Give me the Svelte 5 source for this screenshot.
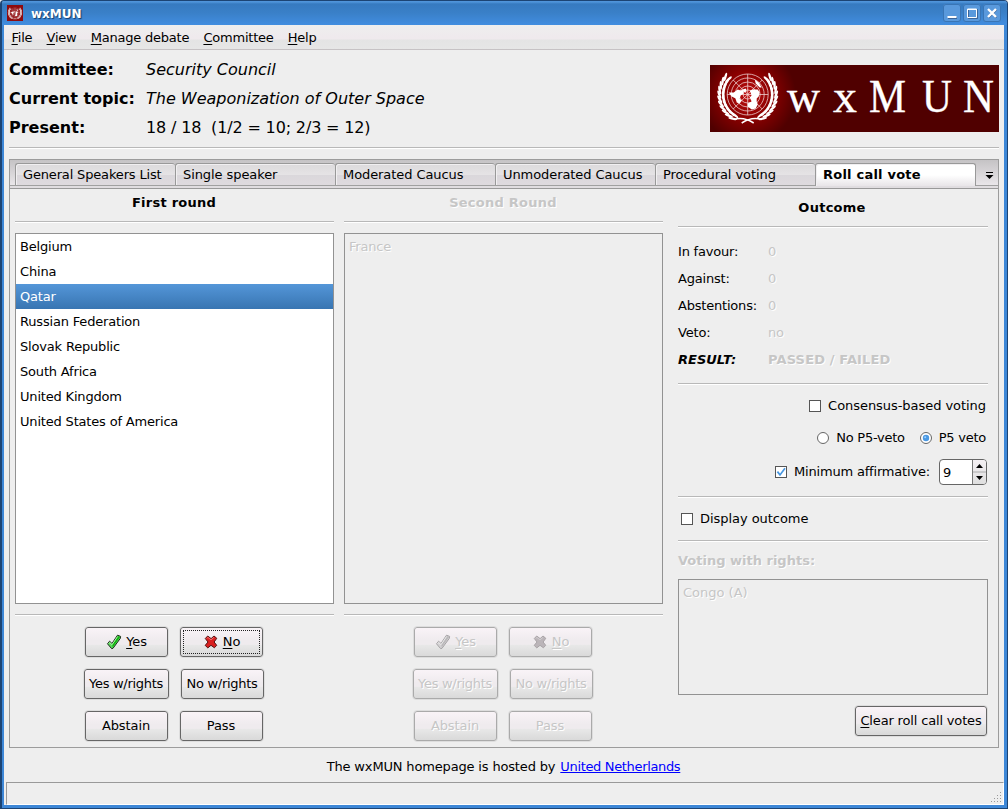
<script>
  const menus = ['File', 'View', 'Manage debate', 'Committee', 'Help'];
  const tabs = ['General Speakers List', 'Single speaker', 'Moderated Caucus', 'Unmoderated Caucus', 'Procedural voting', 'Roll call vote'];
  const countries = ['Belgium', 'China', 'Qatar', 'Russian Federation', 'Slovak Republic', 'South Africa', 'United Kingdom', 'United States of America'];
  const facts = [['Committee:', 'Security Council', true], ['Current topic:', 'The Weaponization of Outer Space', true], ['Present:', '18 / 18  (1/2 = 10; 2/3 = 12)', false]];
  const results = [['In favour:', '0'], ['Against:', '0'], ['Abstentions:', '0'], ['Veto:', 'no']];
  const rounds = [
    { title: 'First round', items: countries, disabled: false },
    { title: 'Second Round', items: ['France'], disabled: true }
  ];
  const letters = [['w', 77, 33], ['x', 123, 24], ['M', 159, 37], ['U', 212, 30], ['N', 253, 31]];
  // Laurel leaves: pairs set along an arc on both sides of the globe.
  const leaves = [];
  for (let i = 0; i < 11; i++) {
    const a = -38 + i * 9.6;
    const r = (a * Math.PI) / 180;
    for (const d of [0, 1]) {
      const rad = d ? 28.4 : 24.4;
      leaves.push({ x: Math.cos(r) * rad, y: Math.sin(r) * rad, rot: a - 90 + (d ? 20 : -8) });
    }
  }
  let selected = $state('Qatar');
  let consensus = $state(false);
  let veto = $state(true);
  let minimum = $state(true);
  let display = $state(false);
</script>

{#snippet emblem()}
  <g fill="none" stroke="#fff" stroke-width=".75" opacity=".85">
    <circle r="20.500" /><circle r="16.500" /><circle r="12.500" /><circle r="8.500" /><circle r="4.500" />
    <path d="M0-20.500V20.500M-20.500 0H20.500M-14.500-14.500L14.500 14.500M14.500-14.500L-14.500 14.500" />
  </g>
  <path fill="#fff" d="M-19-2l5 0 4-3 3 1 2-1 1 4-3 2-1 3 2 2-2 3-3-1-1-4-4-2zM-5-5l3-1 1 3-3 1zM2-4l3-1 5 0 2 3-1 4-2 2 0 3 1 3-2 4-4 1-4-3 0-3 4-2-2-4 2-2zM7-15l4 3 3 5-2 0-4-4z" />
  {#each [1, -1] as side}
    <g transform="scale({side} 1)" fill="#fff">
      {#each leaves as l}
        <ellipse rx="4.4" ry="1.2" transform="translate({l.x} {l.y}) rotate({l.rot})" />
      {/each}
      <path d="M14 25Q4 22-6 28.500" fill="none" stroke="#fff" stroke-width="1.500" />
    </g>
  {/each}
{/snippet}

{#snippet voteIcon(kind, off)}
  <svg class="vicon" width="16" height="16" viewBox="0 0 16 16">
    {#if kind === 'yes'}
      <path d="M1.5 9.8L3.6 7.2 6 9.5 11.5 1.2 14.6 2.4 14.3 4.4 7 14.3 5.6 14.6Z" fill={off ? '#d4d2d4' : '#5bdc5b'} stroke={off ? '#a5a3a5' : '#1c2c1c'} stroke-linejoin="round" />
      <path d="M11.9 2L14 3 6.8 13.2 6.2 10.8z" fill={off ? '#bab8ba' : '#10b410'} />
      <path d="M2.7 9.6l1-1.1 2.4 2.2 5.5-8.2" fill="none" stroke={off ? '#ececec' : '#b5f7b0'} stroke-width=".9" />
    {:else}
      <path d="M2.3 4.5L4.7 2 8.1 4.6 11 2 13.8 4.3 11.1 8 13.7 11.3 11.4 13.8 8 11.3 4.8 13.9 2.2 11.4 5 8Z" fill={off ? '#bbb5b9' : '#d92020'} stroke={off ? '#a9a4a7' : '#541313'} stroke-linejoin="round" />
      <path d="M3.7 4.4L4.9 3.4 8 5.8 10.9 3.4" fill="none" stroke={off ? '#d4d0d2' : '#f77'} stroke-width=".9" />
    {/if}
  </svg>
{/snippet}

{#snippet check(on)}
  <svg class="box" width="12" height="12" viewBox="0 0 12 12">
    <rect x=".5" y=".5" width="11" height="11" fill="#fff" stroke="#555" />
    {#if on}<path d="M2.4 5.6L5 8.9 10 2.3" fill="none" stroke="#4796e0" stroke-width="1.7" />{/if}
  </svg>
{/snippet}

{#snippet radio(on)}
  <svg class="box" width="12" height="12" viewBox="0 0 12 12">
    <circle cx="6" cy="6" r="5.5" fill="#fff" stroke="#666" />
    {#if on}<circle cx="6" cy="6" r="3.2" fill="#4a98e2" /><circle cx="5.2" cy="5.2" r="1" fill="#9bd0ff" />{/if}
  </svg>
{/snippet}

<div class="window">
  <header class="title">
    <svg width="16" height="16" viewBox="0 0 16 16"><rect width="16" height="16" fill="#8e0b0e" /><g transform="translate(8 7.6) scale(.235)">{@render emblem()}</g></svg>
    <b>wxMUN</b>
    <div class="controls">
      <span><svg width="18" height="18"><path d="M5 14h9" stroke="#235" stroke-width="2" opacity=".5" /><path d="M4.500 13h9" stroke="#fff" stroke-width="2" /></svg></span>
      <span><svg width="18" height="18"><path d="M5.500 5.500h9v9h-9z" fill="none" stroke="#235" opacity=".5" /><path d="M4.500 5h9v8.500h-9zM4.500 5.500h9" fill="none" stroke="#fff" /></svg></span>
      <span><svg width="18" height="18"><path d="M5.500 5.500l8 8m0-8l-8 8" stroke="#235" stroke-width="2" opacity=".5" /><path d="M5 5l8 8m0-8l-8 8" stroke="#fff" stroke-width="2.400" /></svg></span>
    </div>
  </header>

  <nav>
    {#each menus as m}<span><u>{m[0]}</u>{m.slice(1)}</span>{/each}
  </nav>

  <section class="head">
    <div class="facts">
      {#each facts as [k, v, italic]}
        <b>{k}</b><span class:italic class:count={!italic}>{v}</span>
      {/each}
    </div>
    <svg class="banner" width="289" height="67" viewBox="0 0 289 67">
      <defs><radialGradient id="glow" gradientUnits="userSpaceOnUse" cx="38" cy="30" r="48"><stop offset="0" stop-color="#c01010" /><stop offset=".5" stop-color="#8a0000" /><stop offset="1" stop-color="#500000" /></radialGradient></defs>
      <rect width="289" height="67" fill="url(#glow)" />
      <g transform="translate(37.700 29.500)">{@render emblem()}</g>
      {#each letters as [c, x, w]}
        <text {x} y="47" textLength={w} lengthAdjust="spacingAndGlyphs">{c}</text>
      {/each}
    </svg>
  </section>
  <hr class="tophr" />

  <main>
    <div class="tabs">
      {#each tabs as t, i}<div class="tab" class:first={i === 0} class:active={i === 5}><span>{t}</span></div>{/each}
      <div class="more"><svg width="9" height="8"><path d="M1 .5h7" stroke="#000" /><path d="M.5 3h8L4.500 7z" /></svg></div>
    </div>
    <div class="page">
      {#each rounds as r}
        <section class="round" class:disabled={r.disabled}>
          <h2>{r.title}</h2>
          <hr />
          <div class="list">
            {#each r.items as c}
              <!-- svelte-ignore a11y_click_events_have_key_events, a11y_no_static_element_interactions -->
              <div class="item" class:sel={!r.disabled && c === selected} onclick={() => { if (!r.disabled) selected = c; }}>{c}</div>
            {/each}
          </div>
          <hr />
          <div class="buttons">
            <div class="pair"><button>{@render voteIcon('yes', r.disabled)}<i><u>Y</u>es</i></button><button class:focus={!r.disabled}>{@render voteIcon('no', r.disabled)}<i><u>N</u>o</i></button></div>
            <div class="pair wide"><button>Yes w/rights</button><button>No w/rights</button></div>
            <div class="pair"><button>Abstain</button><button>Pass</button></div>
          </div>
        </section>
      {/each}

      <section class="outcome">
        <h2>Outcome</h2>
        <hr />
        <div class="results">
          {#each results as [k, v]}<span>{k}</span><span class="dim">{v}</span>{/each}
          <b class="italic">RESULT:</b><b class="dim verdict">PASSED / FAILED</b>
        </div>
        <hr />
        <div class="options">
          <label><input type="checkbox" bind:checked={consensus} />{@render check(consensus)}Consensus-based voting</label>
          <div class="opt radios">
            <label><input type="radio" name="veto" checked={!veto} onchange={() => (veto = false)} />{@render radio(!veto)}No P5-veto</label>
            <label><input type="radio" name="veto" checked={veto} onchange={() => (veto = true)} />{@render radio(veto)}P5 veto</label>
          </div>
          <div class="opt min">
            <label><input type="checkbox" bind:checked={minimum} />{@render check(minimum)}Minimum affirmative:</label>
            <div class="spin"><span>9</span><div class="arrows"><svg width="13" height="24"><path d="M3 8h7L6.500 4zM3 16h7L6.500 20z" /><path d="M0 12h13" stroke="#aaa" /></svg></div></div>
          </div>
        </div>
        <hr />
        <label class="display"><input type="checkbox" bind:checked={display} />{@render check(display)}Display outcome</label>
        <hr />
        <b class="rights dim">Voting with rights:</b>
        <div class="list small"><div class="item dim">Congo (A)</div></div>
        <button class="clear"><i><u>C</u>lear roll call votes</i></button>
      </section>
    </div>
  </main>

  <p>The wxMUN homepage is hosted by <a href="#home">United Netherlands</a></p>
  <footer>
    <svg width="12" height="12" fill="#999">
      {#each [0, 1, 2, 3] as row}{#each [0, 1, 2, 3] as col}{#if row + col >= 3}<rect x={col * 3} y={row * 3} width="1" height="1" />{/if}{/each}{/each}
    </svg>
  </footer>
</div>

<style>
  :global(body) { margin: 0; background: #eee; }
  * { box-sizing: border-box; }
  .window {
    width: 1008px; height: 809px; display: flex; flex-direction: column;
    border: solid #1c4474; border-width: 1px 1px 1px 2px; border-radius: 4px 4px 0 0;
    background: #eee; color: #000; font: 13px/16px "DejaVu Sans", sans-serif;
    box-shadow: inset 2px 0 #3d87d7, inset -3px 0 #3d87d7, inset 0 -3px #3d87d7;
    overflow: hidden;
  }
  .title {
    height: 24px; flex: none; display: flex; align-items: center; padding: 0 6px 0 5px;
    background: linear-gradient(#4f94da 0 1px, #367ac0 3px, #3a80c8 50%, #418de0);
    color: #fff; font-size: 12px; text-shadow: 1px 1px 1px #123c6c;
  }
  .title b { margin: 1px 0 0 8px; }
  .controls { margin-left: auto; display: flex; gap: 2px; }
  .controls span { width: 18px; height: 18px; border-radius: 3px; background: #5999dc; box-shadow: inset 0 0 0 1px #3975b5; }
  .controls svg { display: block; }
  nav {
    height: 25px; flex: none; margin: 0 3px 0 2px; padding: 5px 8px 0 7.5px; display: flex; gap: 14.2px;
    background: linear-gradient(#eee 0, #efe9ed 14px, #e4e4e4 15px, #e6e6e6); border-bottom: 1px solid #c6c2c4;
    letter-spacing: -.22px;
  }
  u { text-decoration: underline; text-underline-offset: 2px; text-decoration-thickness: 1px; text-decoration-skip-ink: none; }
  .head { height: 97px; flex: none; display: flex; justify-content: space-between; padding: 5px 8px 0 7px; }
  .facts { display: grid; grid-template-columns: 137px auto; grid-auto-rows: 29px; align-content: start; line-height: 29px; font-size: 16px; white-space: pre; }
  .italic { font-style: italic; }
  .count { letter-spacing: -.15px; }
  .banner { margin-top: 10px; }
  .banner text { font: 46px "Liberation Serif", serif; fill: #fff; stroke: #fff; stroke-width: .3px; }
  hr { width: 100%; height: 2px; flex: none; margin: 0; border: 0; background: linear-gradient(#b8b8b8 50%, #fff 50%); }
  .tophr { width: 990px; margin: 0 7px; }
  main { width: 990px; height: 589px; flex: none; margin: 10px 7px 0; border: 1px solid #9c9c9c; display: flex; flex-direction: column; }
  .tabs {
    height: 29px; flex: none; display: flex; padding: 3px 0 0 5px; border-bottom: 1px solid #999;
    background: linear-gradient(#c5c3c5, #e9e6e9 25px, #a0a0a0 25px 26px, #e0dde0 26px);
  }
  .tab {
    width: 160px; height: 22px; flex: none; padding: 0 0 0 7px; line-height: 22px;
    border: 1px solid #999; border-bottom: 0; border-right-width: 0; border-radius: 3px 3px 0 0;
    background: linear-gradient(#dcdadc, #e5e3e5 50%, #dad7db 52%, #dedade);
    box-shadow: inset 1px 1px #f1eff1; letter-spacing: -.08px;
  }
  .tab.first { letter-spacing: -.16px; }
  .tab.active { width: 161px; height: 23px; font-weight: bold; background: linear-gradient(#fff 50%, #e8e5e8); border-right-width: 1px; letter-spacing: .22px; }
  .more { display: flex; padding: 9px 0 0 9px; }
  .page { flex: 1; display: flex; padding: 0 10px 0 5px; }
  .round { width: 319px; margin-right: 10px; display: flex; flex-direction: column; }
  h2 { margin: 0; padding: 5px 1px 0 0; height: 32px; font: bold 13px/17px "DejaVu Sans", sans-serif; text-align: center; letter-spacing: .25px; }
  .list { height: 371px; margin: 10px 0; border: 1px solid #929292; background: #fff; flex: none; letter-spacing: -.18px; }
  .item { height: 25px; padding-left: 4px; line-height: 25px; cursor: default; }
  .sel { color: #fff; background: linear-gradient(#5496d8, #3875b2); }
  .buttons { padding: 10px 2px 0 0; display: flex; flex-direction: column; gap: 10px; align-items: center; }
  .pair { display: flex; gap: 10px; width: 180px; }
  button {
    width: 85px; height: 32px; padding: 0 1px; display: flex; align-items: center; justify-content: center;
    border: 1px solid #ddd; border-radius: 4px; font: inherit; color: #000; white-space: nowrap;
    background: linear-gradient(#faf4f8, #efebee 45%, #efebee 58%, #e8e8e8 60%, #d8d8d8) padding-box;
    box-shadow: inset 0 0 0 1px #666; letter-spacing: -.1px;
  }
  button i { font-style: normal; }
  .wide { width: 182px; }
  .wide button:first-child { width: 87px; }
  .wide button { letter-spacing: -.3px; }
  .vicon { margin: 0 4px 0 1px; }
  .focus { outline: 1px dotted #222; outline-offset: -5px; }
  .disabled, .dim { color: #c6c6c6; text-shadow: 1px 1px #fff; }
  .disabled .list, .small { background: transparent; }
  .disabled button { color: inherit; text-shadow: inherit; box-shadow: inset 0 0 0 1px #aaa; }
  .outcome { width: 310px; margin-left: 5px; display: flex; flex-direction: column; }
  .outcome h2 { height: 37px; padding-top: 10px; padding-right: 2px; }
  .results { height: 155px; padding-top: 10px; display: grid; grid-template-columns: 90px auto; grid-auto-rows: 27px; line-height: 27px; }
  .results span { letter-spacing: -.2px; }
  .verdict { letter-spacing: .15px; }
  .options { height: 111px; display: flex; flex-direction: column; align-items: flex-end; padding: 13px 1px 0 0; }
  .options > label { height: 16px; margin-right: 1px; }
  .opt { display: flex; }
  .radios { gap: 15px; margin: 16px 1px 0 0; height: 16px; }
  .min { margin-top: 13px; align-items: center; }
  label { display: flex; align-items: center; white-space: nowrap; letter-spacing: -.05px; }
  .radios label { letter-spacing: -.25px; }
  .min label { letter-spacing: -.18px; }
  input { appearance: none; width: 0; height: 0; margin: 0; }
  .box { margin-right: 7px; }
  .spin { width: 48px; height: 26px; margin: 0 0 -1px 9px; display: flex; border: 1px solid #666; border-radius: 4px; background: #fff; overflow: hidden; line-height: 25px; }
  .spin span { width: 33px; padding-left: 3px; border-right: 1px solid #777; }
  .arrows { width: 13px; background: linear-gradient(#f4f0f3, #dfdfdf); }
  .display { height: 42px; padding-left: 3px; }
  .rights { height: 37px; line-height: 38px; }
  .small { height: 116px; margin: 0; letter-spacing: 0; }
  .clear { width: 134px; margin: 10px 0 0 auto; }
  .clear i { letter-spacing: -.16px; }
  p { margin: 10px 2px 0 0; text-align: center; line-height: 17px; letter-spacing: -.16px; }
  a { color: #00f; margin-left: 1px; letter-spacing: -.34px; }
  footer { height: 23px; margin: 7px 3px 0 4px; border: 1px solid #999; border-right: 1px solid #fff; border-bottom-color: #fff; display: flex; justify-content: flex-end; align-items: flex-end; }
</style>
